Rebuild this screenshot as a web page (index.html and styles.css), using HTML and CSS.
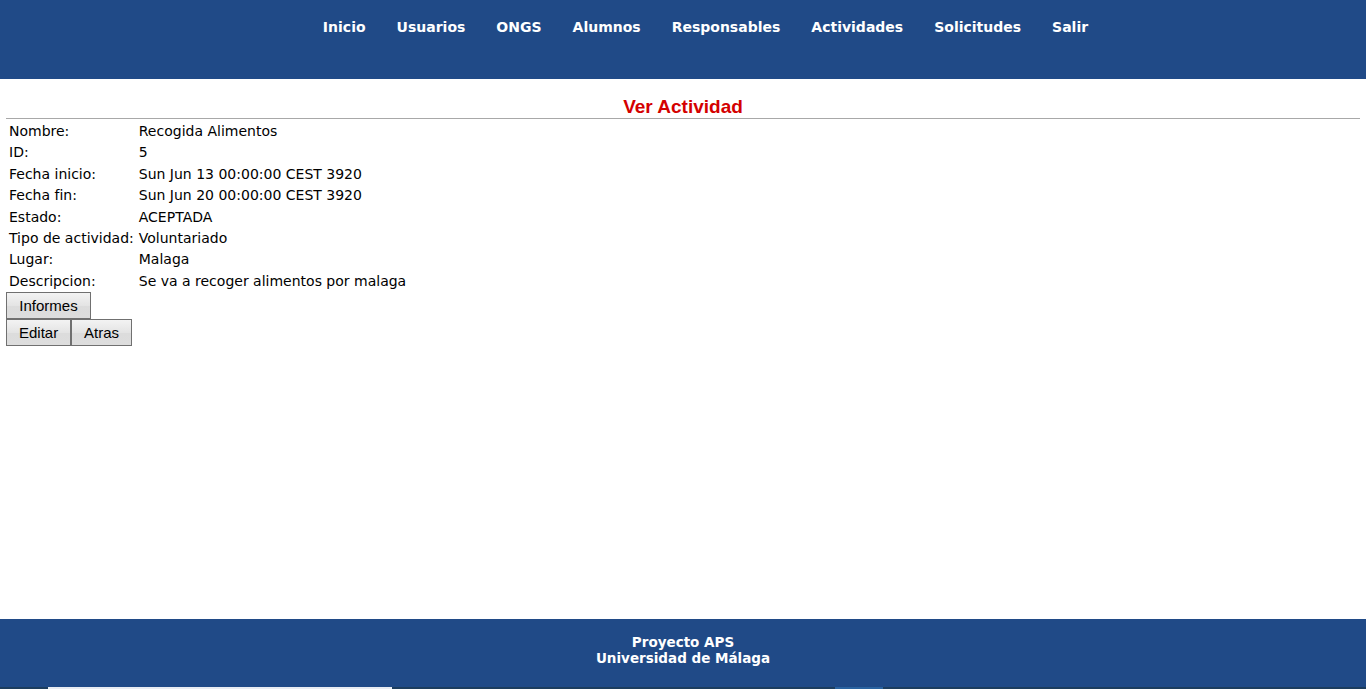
FILE: index.html
```html
<!DOCTYPE html>
<html lang="es">
<head>
<meta charset="utf-8">
<title>Ver Actividad</title>
<link rel="stylesheet" href="styles.css">
</head>
<body>
<div class="page">
  <header class="header">
    <ul class="nav">
      <li><a href="#">Inicio</a></li>
      <li><a href="#">Usuarios</a></li>
      <li><a href="#">ONGS</a></li>
      <li><a href="#">Alumnos</a></li>
      <li><a href="#">Responsables</a></li>
      <li><a href="#">Actividades</a></li>
      <li><a href="#">Solicitudes</a></li>
      <li><a href="#">Salir</a></li>
    </ul>
  </header>
  <main class="content">
    <h1 class="title">Ver Actividad</h1>
    <hr class="rule">
    <table class="details">
      <tr><td>Nombre:</td><td>Recogida Alimentos</td></tr>
      <tr><td>ID:</td><td>5</td></tr>
      <tr><td>Fecha inicio:</td><td>Sun Jun 13 00:00:00 CEST 3920</td></tr>
      <tr><td>Fecha fin:</td><td>Sun Jun 20 00:00:00 CEST 3920</td></tr>
      <tr><td>Estado:</td><td>ACEPTADA</td></tr>
      <tr><td>Tipo de actividad:</td><td>Voluntariado</td></tr>
      <tr><td>Lugar:</td><td>Malaga</td></tr>
      <tr><td>Descripcion:</td><td>Se va a recoger alimentos por malaga</td></tr>
    </table>
    <div class="btnrow"><button class="btn btn-informes">Informes</button></div>
    <div class="btnrow"><button class="btn btn-editar">Editar</button><button class="btn btn-atras">Atras</button></div>
  </main>
  <footer class="footer">
    <div class="footer-text">
      <div>Proyecto APS</div>
      <div>Universidad de Málaga</div>
    </div>
    <div class="strip">
      <span class="strip-a"></span>
      <span class="strip-b"></span>
    </div>
  </footer>
</div>
</body>
</html>
```
FILE: styles.css
```css
html, body {
  margin: 0;
  padding: 0;
  background: #ffffff;
}
.page {
  height: 689px;
  display: flex;
  flex-direction: column;
  overflow: hidden;
}
.header {
  background: #204a87;
  height: 79px;
  flex: none;
}
.nav {
  list-style: none;
  margin: 0;
  padding: 18px 0 0 45px;
  display: flex;
  justify-content: center;
  gap: 31px;
}
.nav a {
  color: #ffffff;
  text-decoration: none;
  font-family: "DejaVu Sans", Verdana, sans-serif;
  font-weight: bold;
  font-size: 14px;
  line-height: 18px;
}
.content {
  flex: 1;
  padding: 0 6px;
  font-family: "DejaVu Sans", Verdana, sans-serif;
  font-size: 14px;
  color: #000;
}
.title {
  margin: 17px 0 0;
  text-align: center;
  font-family: "Liberation Sans", Arial, sans-serif;
  font-size: 19px;
  line-height: 22px;
  font-weight: bold;
  color: #d40000;
}
.rule {
  margin: 0;
  border: 0;
  border-top: 1px solid #a8a8a8;
  height: 0;
}
.details {
  border-collapse: collapse;
  margin-top: 2px;
}
.details td {
  padding: 0 3px;
  line-height: 21.375px;
  white-space: nowrap;
  vertical-align: middle;
}
.details td:first-child {
  padding-right: 2px;
}
.btnrow {
  display: flex;
}
.btn {
  font-family: "Liberation Sans", Arial, sans-serif;
  font-size: 15px;
  line-height: 17px;
  height: 27px;
  padding: 0 12px;
  margin: 0;
  border: 1px solid #707070;
  background: linear-gradient(#f3f3f3, #e4e4e4 50%, #dcdcdc 51%, #dddddd);
  color: #000;
  border-radius: 0;
}
.btn-informes { width: 85px; }
.btn-editar { width: 65px; }
.btn-atras { width: 61px; }
.footer {
  background: #204a87;
  height: 70px;
  flex: none;
  display: flex;
  flex-direction: column;
}
.footer-text {
  flex: 1;
  text-align: center;
  color: #ffffff;
  font-family: "DejaVu Sans", Verdana, sans-serif;
  font-weight: bold;
  font-size: 13.5px;
  line-height: 16px;
  padding-top: 15px;
}
.strip {
  height: 2px;
  background: #1c3d5e;
  display: flex;
}
.strip-a {
  margin-left: 48px;
  width: 344px;
  background: #e8ecf2;
}
.strip-b {
  margin-left: 443px;
  width: 48px;
  background: #2a63a0;
}
```
